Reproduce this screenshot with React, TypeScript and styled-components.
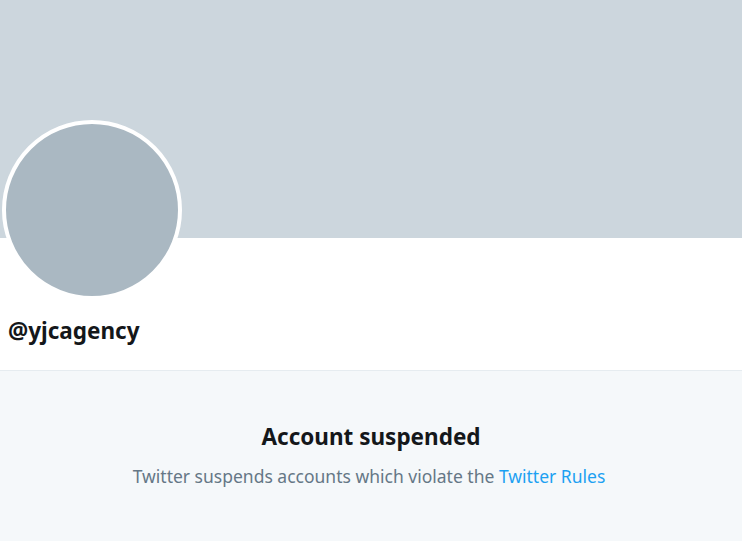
import React from "react";
import styled, { createGlobalStyle } from "styled-components";

const Global = createGlobalStyle`
  html, body { margin: 0; padding: 0; background: #f5f8fa; }
  body { font-family: "Noto Sans", "Open Sans", Arial, sans-serif; }
`;

const Page = styled.div`
  width: 742px;
  height: 541px;
  display: flex;
  flex-direction: column;
  overflow: hidden;
`;

const Banner = styled.div`
  height: 238px;
  background: #ccd6dd;
  flex-shrink: 0;
`;

const Profile = styled.div`
  background: #ffffff;
  border-bottom: 1px solid #e6ecf0;
  padding: 0 8px;
  display: flex;
  flex-direction: column;
  align-items: flex-start;
  height: 133px;
  box-sizing: border-box;
  flex-shrink: 0;
`;

const Avatar = styled.div`
  width: 172px;
  height: 172px;
  border-radius: 50%;
  background: #aab8c2;
  border: 4.5px solid #ffffff;
  margin: -118px 0 0 -6px;
`;

const Handle = styled.div`
  margin-top: 17px;
  font-size: 22.5px;
  line-height: 28px;
  font-weight: 700;
  color: #14171a;
`;

const Notice = styled.div`
  flex: 1;
  background: #f5f8fa;
  display: flex;
  flex-direction: column;
  align-items: center;
  padding-top: 52px;
`;

const Title = styled.div`
  font-size: 22.5px;
  line-height: 28px;
  font-weight: 700;
  color: #14171a;
`;

const Sub = styled.div`
  margin-top: 14px;
  font-size: 17.5px;
  line-height: 22px;
  color: #657786;
  transform: translateX(-2px);
`;

const Link = styled.a`
  color: #1da1f2;
  text-decoration: none;
`;

export default function App() {
  return (
    <Page>
      <Global />
      <Banner />
      <Profile>
        <Avatar />
        <Handle>@yjcagency</Handle>
      </Profile>
      <Notice>
        <Title>Account suspended</Title>
        <Sub>
          Twitter suspends accounts which violate the <Link href="#">Twitter Rules</Link>
        </Sub>
      </Notice>
    </Page>
  );
}
